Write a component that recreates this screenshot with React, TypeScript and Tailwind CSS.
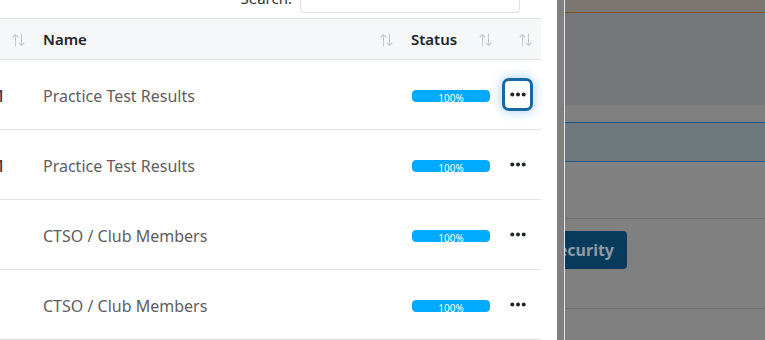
import React from "react";

type Row = { lead: string; name: string; pct: number; focused?: boolean };

const rows: Row[] = [
  { lead: "1", name: "Practice Test Results", pct: 100, focused: true },
  { lead: "1", name: "Practice Test Results", pct: 100 },
  { lead: "", name: "CTSO / Club Members", pct: 100 },
  { lead: "", name: "CTSO / Club Members", pct: 100 },
];

function SortIcon() {
  return (
    <svg width="13" height="14" viewBox="0 0 13 14" fill="none" stroke="#c6cbd1" strokeWidth="1.1" strokeLinecap="round" strokeLinejoin="round">
      <path d="M3.5 13V1.5M1 4l2.5-2.5L6 4" />
      <path d="M9.5 1v11.5M7 10l2.5 2.5L12 10" />
    </svg>
  );
}

function Dots() {
  return (
    <svg width="16" height="5" viewBox="0 0 16 5" fill="#212529">
      <circle cx="2.3" cy="2.5" r="2" />
      <circle cx="8" cy="2.5" r="2" />
      <circle cx="13.7" cy="2.5" r="2" />
    </svg>
  );
}

function Progress({ pct }: { pct: number }) {
  return (
    <div className="h-[12px] w-[78px] overflow-hidden rounded-[4px] bg-[#e9ecef]">
      <div
        className="flex h-full justify-center overflow-hidden rounded-[4px] bg-[#00aaff] pt-[2px] text-[10px] leading-[12px] text-white"
        style={{ width: `${pct}%` }}
      >
        {pct}%
      </div>
    </div>
  );
}

export default function App() {
  return (
    <div className="flex h-[340px] w-[765px] overflow-hidden bg-white font-['Noto_Sans',sans-serif]">
      <div className="w-[557px] shrink-0 overflow-hidden bg-white">
        <div className="flex h-[18px] items-end justify-end overflow-hidden pb-[5px] pr-[37px]">
          <span className="mb-[5px] text-[15px] leading-[20px] text-[#333]">Search:</span>
          <div className="ml-[8px] h-[32px] w-[220px] shrink-0 rounded-[4px] border border-[#dee2e6] bg-white" />
        </div>

        <div className="w-[541px]">
          <div className="grid h-[42px] grid-cols-[33px_368px_99px_41px] border-y border-[#dee2e6] bg-[#f6f7f9] pt-[1px] text-[15px] font-semibold text-[#212529]">
            <div className="flex items-center justify-end pr-[8px]">
              <SortIcon />
            </div>
            <div className="flex items-center justify-between pl-[10px] pr-[8px]">
              <span>Name</span>
              <SortIcon />
            </div>
            <div className="flex items-center justify-between pl-[10px] pr-[8px]">
              <span>Status</span>
              <SortIcon />
            </div>
            <div className="flex items-center justify-end pr-[9px]">
              <SortIcon />
            </div>
          </div>

          {rows.map((r, i) => (
            <div
              key={i}
              className="grid h-[70px] grid-cols-[33px_368px_99px_41px] border-b border-[#dee2e6] text-[16px] text-[#5e5e5e]"
            >
              <div className="flex items-center overflow-hidden pt-[3px]">
                {r.lead ? (
                  <span className="ml-[-4px] font-medium text-[#333]">{r.lead}</span>
                ) : null}
              </div>
              <div className="flex items-center pl-[10px] pt-[3px]">{r.name}</div>
              <div className="flex items-center pl-[11px] pt-[3px]">
                <Progress pct={r.pct} />
              </div>
              <div className="flex items-center">
                <button
                  className={`ml-[2px] flex h-[33px] w-[31px] items-center justify-center rounded-[7px] ${
                    r.focused
                      ? "border-[3px] border-[#1a68a3] bg-white shadow-[0_0_10px_3px_rgba(0,120,220,0.22)]"
                      : "border-[3px] border-transparent"
                  }`}
                >
                  <Dots />
                </button>
              </div>
            </div>
          ))}
        </div>
      </div>

      <div className="w-[7px] shrink-0 bg-[#808080]" />
      <div className="w-px shrink-0 bg-[#dbe6f1]" />

      <div className="flex min-w-0 flex-1 flex-col bg-[#808080]">
        <div className="h-[12px] bg-[#7c7771]" />
        <div className="h-px bg-[#7d5518]" />
        <div className="h-[92px] bg-[#76777b]" />
        <div className="h-[17px] bg-[#808080]" />
        <div className="h-px bg-[#155a8a]" />
        <div className="h-[38px] bg-[#6f787a]" />
        <div className="h-px bg-[#155a8a]" />
        <div className="h-[56px]" />
        <div className="h-px bg-[#6f6f6f]" />
        <div className="flex h-[89px] items-start pt-[12px]">
          <div className="flex w-[62px] justify-end overflow-hidden">
            <span className="shrink-0 rounded-[4px] bg-[#073a5b] py-[6px] pl-[13px] pr-[13px] text-[16px] font-bold leading-[26px] text-[#8d9ba6]">
              Security
            </span>
          </div>
        </div>
        <div className="h-px bg-[#6f6f6f]" />
        <div className="flex-1" />
      </div>
    </div>
  );
}
